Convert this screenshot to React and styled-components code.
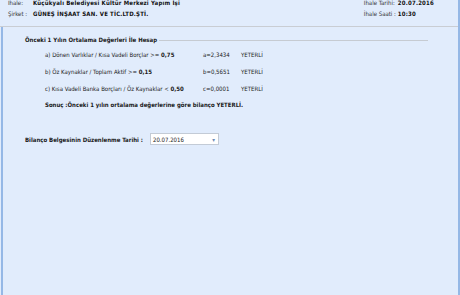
import React from 'react';
import styled, { createGlobalStyle } from 'styled-components';

const GlobalStyle = createGlobalStyle`
  html, body {
    margin: 0;
    padding: 0;
    background: #e1ecfc;
  }
  body {
    font-family: "DejaVu Sans Condensed", "DejaVu Sans", sans-serif;
    font-size: 6px;
    color: #1a1a1a;
  }
`;

const ratios = [
  { label: 'a) Dönen Varlıklar / Kısa Vadeli Borçlar', op: '>=', limit: '0,75', value: 'a=2,3434' },
  { label: 'b) Öz Kaynaklar / Toplam Aktif', op: '>=', limit: '0,15', value: 'b=0,5651' },
  { label: 'c) Kısa Vadeli Banka Borçları / Öz Kaynaklar', op: '<', limit: '0,50', value: 'c=0,0001' },
];

const App = () => {
  return (
    <Page>
      <GlobalStyle />
      <Header>
        <InfoColumn>
          <InfoRow>
            <InfoLabel>İhale:</InfoLabel>
            <InfoValue>Küçükyalı Belediyesi Kültür Merkezi Yapım İşi</InfoValue>
          </InfoRow>
          <InfoRow>
            <InfoLabel>Şirket :</InfoLabel>
            <InfoValue>GÜNEŞ İNŞAAT SAN. VE TİC.LTD.ŞTİ.</InfoValue>
          </InfoRow>
        </InfoColumn>
        <InfoColumn>
          <InfoRow>
            <InfoLabel wide>İhale Tarihi:</InfoLabel>
            <InfoValue>20.07.2016</InfoValue>
          </InfoRow>
          <InfoRow>
            <InfoLabel wide>İhale Saati :</InfoLabel>
            <InfoValue>10:30</InfoValue>
          </InfoRow>
        </InfoColumn>
      </Header>
      <Body>
        <GroupTitle>
          <span>Önceki 1 Yılın Ortalama Değerleri İle Hesap</span>
          <TitleLine />
        </GroupTitle>
        {ratios.map((r) => (
          <RatioRow key={r.value}>
            <RatioLabel>
              {r.label} {r.op} <b>{r.limit}</b>
            </RatioLabel>
            <RatioValue>{r.value}</RatioValue>
            <span>YETERLİ</span>
          </RatioRow>
        ))}
        <Result>Sonuç :Önceki 1 yılın ortalama değerlerine göre bilanço YETERLİ.</Result>
        <DateRow>
          <DateLabel>Bilanço Belgesinin Düzenlenme Tarihi :</DateLabel>
          <DateBox>
            <span>20.07.2016</span>
            <Arrow>▾</Arrow>
          </DateBox>
        </DateRow>
      </Body>
    </Page>
  );
};

export default App;

const Page = styled.div`
  width: 458px;
  height: 295px;
  border-right: 2px solid #95b8e6;
  background: #e1ecfc;
  display: flex;
  flex-direction: column;
  overflow: hidden;
`;

const Header = styled.div`
  height: 27px;
  flex-shrink: 0;
  display: flex;
  justify-content: space-between;
  padding: 0 24px 0 8px;
  border-bottom: 1px solid #c9cdd3;
  box-sizing: border-box;
`;

const InfoColumn = styled.div`
  display: flex;
  flex-direction: column;
  margin-top: -3px;
`;

const InfoRow = styled.div`
  display: flex;
  align-items: center;
  height: 11px;
`;

const InfoLabel = styled.span`
  width: ${({ wide }) => (wide ? '34px' : '25px')};
  color: #333;
`;

const InfoValue = styled.span`
  font-weight: bold;
  color: #111;
  letter-spacing: 0.2px;
`;

const Body = styled.div`
  flex: 1;
  border-left: 2px solid #95b8e6;
  margin-left: 1px;
  padding: 7px 0 0 22px;
`;

const GroupTitle = styled.div`
  display: flex;
  align-items: center;
  width: 403px;
  height: 10px;
  font-weight: bold;
  margin-bottom: 2px;
`;

const TitleLine = styled.div`
  flex: 1;
  height: 1px;
  background: #c6cbd2;
  margin-left: 2px;
  margin-top: 3px;
`;

const RatioRow = styled.div`
  display: flex;
  align-items: center;
  height: 17px;
  padding-left: 20px;
`;

const RatioLabel = styled.span`
  width: 158px;
`;

const RatioValue = styled.span`
  width: 38px;
`;

const Result = styled.div`
  font-weight: bold;
  padding-left: 20px;
  height: 15px;
  display: flex;
  align-items: center;
`;

const DateRow = styled.div`
  display: flex;
  align-items: center;
  margin-top: 21px;
`;

const DateLabel = styled.span`
  font-weight: bold;
  width: 125px;
`;

const DateBox = styled.div`
  width: 62px;
  height: 10px;
  background: #fff;
  border: 1px solid #c3cbd6;
  display: flex;
  align-items: center;
  justify-content: space-between;
  padding: 0 3px 0 2px;
`;

const Arrow = styled.span`
  color: #6d8bb5;
  font-size: 6px;
`;
